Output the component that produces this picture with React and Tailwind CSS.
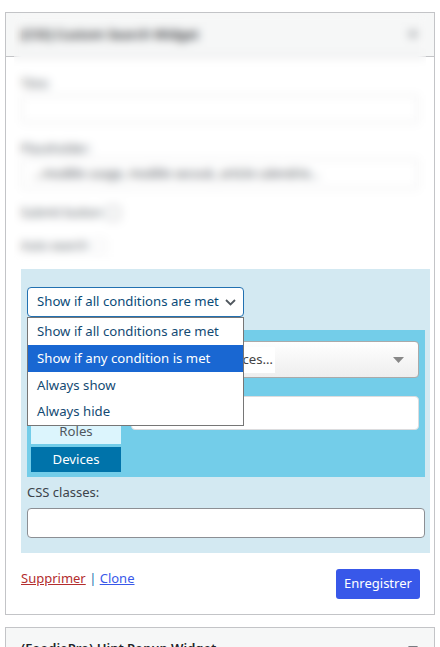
import React from "react";

const font = { fontFamily: '"Noto Sans", "Open Sans", sans-serif' };

function Chevron() {
  return (
    <svg width="11" height="7" viewBox="0 0 11 7" className="shrink-0">
      <path d="M1 1 L5.5 5.5 L10 1" fill="none" stroke="#50575e" strokeWidth="1.8" />
    </svg>
  );
}

export default function App() {
  return (
    <div className="relative w-[440px] h-[647px] overflow-hidden bg-white px-[5px] pt-[12px] text-[#1d2327]" style={font}>
      {/* Widget 1 */}
      <div className="border border-[#c3c4c7] bg-white">
        <div className="flex h-[44px] items-center justify-between border-b border-[#c3c4c7] bg-[#f6f7f7] pl-[15px] pr-[16px]">
          <span className="text-[13px] font-semibold text-[#1d2327]">[CSS] Custom Search Widget</span>
          <svg width="10" height="6" viewBox="0 0 10 6"><path d="M0 0 L10 0 L5 6 Z" fill="#787c82" /></svg>
        </div>
        <div className="pl-[15px] pr-[4px] pt-[18px]">
          <div className="pr-[11px]">
            <div className="text-[12px] text-[#50575e] leading-[18px]">Titre:</div>
            <div className="mt-[2px] h-[28px] rounded-[4px] border border-[#dcdcde] bg-white" />
            <div className="mt-[17px] text-[12px] text-[#50575e] leading-[18px]">Placeholder:</div>
            <div className="mt-[1px] flex h-[30px] items-center rounded-[4px] border border-[#dcdcde] bg-white pl-[11px] text-[12px] text-[#3c434a]">
              ...modèle usage, modèle secouk, article calendrie...
            </div>
            <div className="mt-[14px] flex h-[20px] items-center gap-[4px] text-[12px] text-[#50575e]">
              <span>Submit button</span>
              <span className="inline-block h-[14px] w-[14px] rounded-[3px] border border-[#8c8f94]" />
            </div>
            <div className="mt-[13px] flex h-[20px] items-center gap-[4px] text-[12px] text-[#50575e]">
              <span>Auto search</span>
              <span className="inline-block h-[14px] w-[14px] rounded-[3px] border border-[#dcdcde]" />
            </div>
          </div>

          {/* Blue panel */}
          <div className="relative mt-[13px] bg-[#d3e9f2] px-[6px] pb-[15px] pt-[18px]">
            <div className="flex h-[30px] w-[217px] items-center justify-between rounded-[4px] border border-[#2271b1] bg-white pl-[9px] pr-[7px] text-[13.2px] text-[#0a4b78]">
              <span className="whitespace-nowrap">Show if all conditions are met</span>
              <Chevron />
            </div>

            {/* dropdown list overlay */}
            <div className="absolute left-[6px] top-[48px] z-10 w-[217px] border border-[#767676] bg-white text-[13.2px] text-[#134a73]">
              <div className="flex h-[27px] items-center whitespace-nowrap pl-[9px]">Show if all conditions are met</div>
              <div className="flex h-[27px] items-center whitespace-nowrap bg-[#1967d2] pl-[9px] text-white">Show if any condition is met</div>
              <div className="flex h-[27px] items-center pl-[9px]">Always show</div>
              <div className="flex h-[26px] items-center pl-[9px]">Always hide</div>
            </div>

            <div className="mt-[13px] mr-[-1px] flex h-[147px] bg-[#73cde9] py-[5px] pl-[4px] pr-[6px]">
              <div className="flex w-[90px] flex-col gap-[3px] text-[13.2px]">
                <div className="flex h-[25px] items-center justify-center bg-[#dcf5fd] text-[#50575e]">Pages</div>
                <div className="flex h-[25px] items-center justify-center bg-[#dcf5fd] text-[#50575e]">Post types</div>
                <div className="flex h-[25px] items-center justify-center bg-[#dcf5fd] text-[#50575e]">Users</div>
                <div className="flex h-[25px] items-center justify-center bg-[#dcf5fd] text-[#50575e]">Roles</div>
                <div className="flex h-[25px] items-center justify-center bg-[#0073aa] text-white">Devices</div>
              </div>
              <div className="ml-[10px] flex flex-1 flex-col pt-[6px]">
                <div className="flex h-[37px] items-center justify-between rounded-[4px] border border-[#aaaaaa] bg-gradient-to-b from-white to-[#eeeeee] pl-[8px] pr-[14px] text-[13.2px] text-[#444]">
                  <span className="inline-flex h-[26px] items-center whitespace-nowrap bg-white pl-[37px] pr-[2px]">Select devices…</span>
                  <svg width="11" height="6" viewBox="0 0 11 6"><path d="M0 0 L11 0 L5.5 6 Z" fill="#888" /></svg>
                </div>
                <div className="mt-[18px] h-[34px] rounded-[4px] border border-[#dcdcde] bg-white" />
              </div>
            </div>

            <div className="mt-[6px] text-[13px] leading-[18px] text-[#3c434a]">CSS classes:</div>
            <div className="mt-[7px] mr-[-1px] h-[30px] rounded-[4px] border border-[#8c8f94] bg-white" />
          </div>

          {/* footer */}
          <div className="flex items-start justify-between pb-[15px] pr-[10px] pt-[16px]">
            <div className="text-[13px] leading-[18px]">
              <a className="text-[#b32d2e] underline">Supprimer</a>
              <span className="text-[#2271b1]"> | </span>
              <a className="text-[#3858e9] underline">Clone</a>
            </div>
            <button className="h-[30px] w-[84px] rounded-[3px] bg-[#3858e9] text-[13px] text-white">Enregistrer</button>
          </div>
        </div>
      </div>

      {/* Widget 2 */}
      <div className="mt-[12px] border border-[#c3c4c7] bg-[#f6f7f7]">
        <div className="flex h-[42px] items-center justify-between pl-[15px] pr-[16px]">
          <span className="text-[13px] font-semibold text-[#1d2327]">(FoodiePro) Hint Popup Widget</span>
          <svg width="10" height="6" viewBox="0 0 10 6"><path d="M0 0 L10 0 L5 6 Z" fill="#787c82" /></svg>
        </div>
      </div>

      {/* blur overlay over top portion */}
      <div className="pointer-events-none absolute left-[14px] top-[14px] h-[252px] w-[412px] backdrop-blur-[5px]" />
    </div>
  );
}
